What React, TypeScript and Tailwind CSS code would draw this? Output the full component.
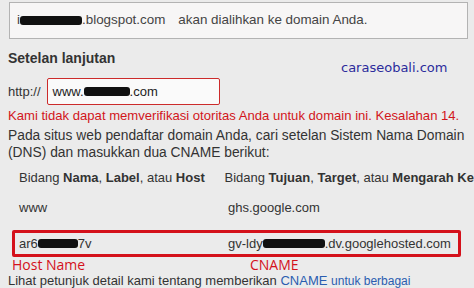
import React from 'react';

function Blot({ w }: { w: number }) {
  // redacted text, drawn as a black scribble
  return (
    <span
      className="inline-block h-[9px] bg-[#111] rounded-[3px] align-middle"
      style={{ width: w }}
    />
  );
}

export default function App() {
  return (
    <div className="relative w-[474px] h-[288px] overflow-hidden bg-[#ebebeb] text-[13px] text-[#333] font-['Liberation_Sans',Arial,sans-serif]">
      <div className="pt-[2px] pl-[9px]">
        <div className="w-[459px] h-[37px] border border-[#b3b3b3] bg-[#f7f6f6] flex items-center pl-[7px] text-[#444] text-[13.4px]">
          <span>i</span>
          <Blot w={62} />
          <span>.blogspot.com</span>
          <span className="ml-[13px]">akan dialihkan ke domain Anda.</span>
        </div>
      </div>

      <div className="pl-[8px] mt-[11px] text-[14px] font-bold leading-[17px]">Setelan lanjutan</div>

      <div className="flex items-center pl-[8px] mt-[11px]">
        <span>http://</span>
        <div className="ml-[6px] w-[173px] h-[27px] border border-[#cc2b2b] rounded-[2px] bg-[#fafafa] flex items-center pl-[5px] text-[#222]">
          <span>www.</span>
          <Blot w={46} />
          <span>.com</span>
        </div>
      </div>

      <div className="pl-[8px] mt-[2px] text-[#d2161b] leading-[17px] text-[13.1px]">
        Kami tidak dapat memverifikasi otoritas Anda untuk domain ini. Kesalahan 14.
      </div>

      <div className="pl-[8px] mt-[3px] leading-[17px] text-[13.8px]">
        Pada situs web pendaftar domain Anda, cari setelan Sistem Nama Domain
        <br />
        (DNS) dan masukkan dua CNAME berikut:
      </div>

      <div className="flex mt-[8px] leading-[17px] whitespace-nowrap">
        <div className="w-[228px] pl-[19px]">
          Bidang <b>Nama</b>, <b>Label</b>, atau <b>Host</b>
        </div>
        <div>
          Bidang <b>Tujuan</b>, <b>Target</b>, atau <b>Mengarah Ke</b>
        </div>
      </div>

      <div className="flex mt-[13px] leading-[17px]">
        <div className="w-[228px] pl-[19px]">www</div>
        <div>ghs.google.com</div>
      </div>

      <div className="ml-[12px] mt-[14px] w-[449px] h-[27px] border-[3px] border-[#d4111b] rounded-[2px] flex items-center whitespace-nowrap">
        <div className="w-[213px] pl-[4px] flex items-center">
          <span>ar6</span>
          <Blot w={40} />
          <span>7v</span>
        </div>
        <div className="flex items-center">
          <span>gv-ldy</span>
          <Blot w={62} />
          <span>.dv.googlehosted.com</span>
        </div>
      </div>

      <div className="flex leading-[16px] text-[14px] text-[#d4111b] font-['Open_Sans',sans-serif]">
        <div className="w-[250px] pl-[12px]">Host Name</div>
        <div>CNAME</div>
      </div>

      <div className="pl-[8px] leading-[16px] whitespace-nowrap">
        Lihat petunjuk detail kami tentang memberikan{' '}
        <span className="text-[#2a5db0]">CNAME</span>{' '}
        <span className="text-[#2a5db0] text-[12px]">untuk berbagai</span>
      </div>

      <div className="absolute left-[341px] top-[58px] text-[13px] text-[#2b2b9c] font-['DejaVu_Sans',sans-serif]">
        caraseobali.com
      </div>
    </div>
  );
}
